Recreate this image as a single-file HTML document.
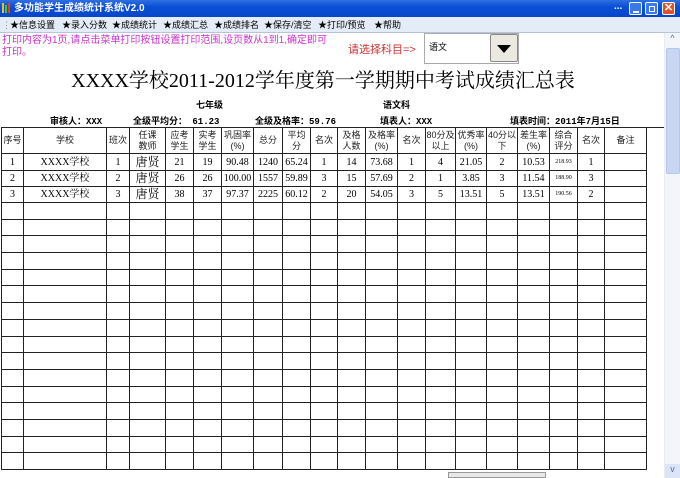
<!DOCTYPE html>
<html><head><meta charset="utf-8"><style>
*{margin:0;padding:0;box-sizing:border-box}
body{width:680px;height:478px;overflow:hidden;background:#fff;font-family:"Liberation Sans","Noto Sans CJK SC",sans-serif;position:relative}
.a{position:absolute;white-space:nowrap}
#title{left:0;top:0;width:680px;height:17px;background:linear-gradient(#2f6fe0,#0a4fd6 40%,#0846c8);color:#fff;font-size:10px;line-height:17px;font-weight:bold}
#menu{left:0;top:17px;width:680px;height:16px;background:#e4ecf7;border-bottom:1px solid #b8c4d8;font-size:9px;line-height:16px;color:#000}
#menu span{position:absolute}
table{border-collapse:collapse;table-layout:fixed;font-family:"Liberation Serif","Noto Serif CJK SC",serif}
td{border:1px solid #222;text-align:center;font-size:10px;padding:0;overflow:hidden;line-height:11px}
.h td{font-size:9px;font-family:"Liberation Sans","Noto Sans CJK SC",sans-serif;color:#222}
.t{font-size:12px}
.b{font-weight:bold;font-size:9px;font-family:"Liberation Mono","Noto Sans CJK SC",monospace}
.btn{top:2px;width:13px;height:13px;border:1px solid #fff;border-radius:2px}
</style></head><body>
<div id="title" class="a"><span style="position:absolute;left:2px;top:3px;width:2px;height:10px;background:#f5c400"></span><span style="position:absolute;left:5px;top:5px;width:2px;height:8px;background:#3c3"></span><span style="position:absolute;left:8px;top:3px;width:2px;height:10px;background:#e33"></span><span style="position:absolute;left:14px">多功能学生成绩统计系统V2.0</span><span style="position:absolute;left:614px;top:-2px">...</span></div>
<div class="a btn" style="left:629px;background:#3b78e8"><div style="position:absolute;left:3px;top:8px;width:6px;height:2px;background:#fff"></div></div>
<div class="a btn" style="left:645px;background:#3b78e8"><div style="position:absolute;left:3px;top:3px;width:6px;height:6px;border:1px solid #fff"></div></div>
<div class="a btn" style="left:662px;background:#e0532a;color:#fff;font-size:11px;line-height:11px;text-align:center;font-weight:bold">✕</div>
<div id="menu" class="a"><span style="left:2px;color:#888">⋮</span><span style="left:10px">★信息设置</span><span style="left:62px">★录入分数</span><span style="left:112px">★成绩统计</span><span style="left:163px">★成绩汇总</span><span style="left:214px">★成绩排名</span><span style="left:264px">★保存/清空</span><span style="left:318px">★打印/预览</span><span style="left:374px">★帮助</span></div>
<div class="a" style="left:2px;top:35px;font-size:10px;line-height:12px;color:#c3c;white-space:normal;width:335px">打印内容为1页,请点击菜单打印按钮设置打印范围,设页数从1到1,确定即可打印。</div>
<div class="a" style="left:348px;top:41px;font-size:11px;color:#c33">请选择科目=&gt;</div>
<div class="a" style="left:424px;top:33px;width:95px;height:31px;border:1px solid #aaa;background:#fff;font-size:9px;line-height:27px;padding-left:4px">语文</div>
<div class="a" style="left:490px;top:34px;width:28px;height:28px;background:#ece9e2;border:1px solid #888;border-radius:2px"><div style="position:absolute;left:6px;top:10px;border-left:7px solid transparent;border-right:7px solid transparent;border-top:8px solid #000"></div></div>
<div class="a" style="left:0;width:646px;top:64px;text-align:center;font-size:20px;font-family:'Liberation Serif','Noto Serif CJK SC',serif">XXXX学校2011-2012学年度第一学期期中考试成绩汇总表</div>
<div class="a b" style="left:196px;top:98px">七年级</div>
<div class="a b" style="left:383px;top:98px">语文科</div>
<div class="a b" style="left:50px;top:114px">审核人：XXX</div>
<div class="a b" style="left:133px;top:114px">全级平均分： 61.23</div>
<div class="a b" style="left:255px;top:114px">全级及格率：59.76</div>
<div class="a b" style="left:380px;top:114px">填表人：XXX</div>
<div class="a b" style="left:510px;top:114px">填表时间：2011年7月15日</div>
<div class="a" style="left:646px;top:127px;width:18px;height:1px;background:#222"></div>
<table class="a" style="left:1px;top:127px;width:645px">
<colgroup><col style="width:22px"><col style="width:83px"><col style="width:23px"><col style="width:36px"><col style="width:28px"><col style="width:28px"><col style="width:32px"><col style="width:29px"><col style="width:28px"><col style="width:27px"><col style="width:28px"><col style="width:32px"><col style="width:28px"><col style="width:30px"><col style="width:31px"><col style="width:31px"><col style="width:32px"><col style="width:28px"><col style="width:27px"><col style="width:42px"></colgroup>
<tr class="h" style="height:26px"><td>序号</td><td>学校</td><td>班次</td><td>任课<br>教师</td><td>应考<br>学生</td><td>实考<br>学生</td><td>巩固率<br>(%)</td><td>总分</td><td>平均<br>分</td><td>名次</td><td>及格<br>人数</td><td>及格率<br>(%)</td><td>名次</td><td>80分及<br>以上</td><td>优秀率<br>(%)</td><td>40分以<br>下</td><td>差生率<br>(%)</td><td>综合<br>评分</td><td>名次</td><td>备注</td></tr>
<tr style="height:17px"><td>1</td><td>XXXX学校</td><td>1</td><td class="t">唐贤</td><td>21</td><td>19</td><td>90.48</td><td>1240</td><td>65.24</td><td>1</td><td>14</td><td>73.68</td><td>1</td><td>4</td><td>21.05</td><td>2</td><td>10.53</td><td style="font-size:6px">218.93</td><td>1</td><td></td></tr>
<tr style="height:16px"><td>2</td><td>XXXX学校</td><td>2</td><td class="t">唐贤</td><td>26</td><td>26</td><td>100.00</td><td>1557</td><td>59.89</td><td>3</td><td>15</td><td>57.69</td><td>2</td><td>1</td><td>3.85</td><td>3</td><td>11.54</td><td style="font-size:6px">188.90</td><td>3</td><td></td></tr>
<tr style="height:16px"><td>3</td><td>XXXX学校</td><td>3</td><td class="t">唐贤</td><td>38</td><td>37</td><td>97.37</td><td>2225</td><td>60.12</td><td>2</td><td>20</td><td>54.05</td><td>3</td><td>5</td><td>13.51</td><td>5</td><td>13.51</td><td style="font-size:6px">190.56</td><td>2</td><td></td></tr>
<tr style="height:16.7px"><td></td><td></td><td></td><td></td><td></td><td></td><td></td><td></td><td></td><td></td><td></td><td></td><td></td><td></td><td></td><td></td><td></td><td></td><td></td><td></td></tr>
<tr style="height:16.7px"><td></td><td></td><td></td><td></td><td></td><td></td><td></td><td></td><td></td><td></td><td></td><td></td><td></td><td></td><td></td><td></td><td></td><td></td><td></td><td></td></tr>
<tr style="height:16.7px"><td></td><td></td><td></td><td></td><td></td><td></td><td></td><td></td><td></td><td></td><td></td><td></td><td></td><td></td><td></td><td></td><td></td><td></td><td></td><td></td></tr>
<tr style="height:16.7px"><td></td><td></td><td></td><td></td><td></td><td></td><td></td><td></td><td></td><td></td><td></td><td></td><td></td><td></td><td></td><td></td><td></td><td></td><td></td><td></td></tr>
<tr style="height:16.7px"><td></td><td></td><td></td><td></td><td></td><td></td><td></td><td></td><td></td><td></td><td></td><td></td><td></td><td></td><td></td><td></td><td></td><td></td><td></td><td></td></tr>
<tr style="height:16.7px"><td></td><td></td><td></td><td></td><td></td><td></td><td></td><td></td><td></td><td></td><td></td><td></td><td></td><td></td><td></td><td></td><td></td><td></td><td></td><td></td></tr>
<tr style="height:16.7px"><td></td><td></td><td></td><td></td><td></td><td></td><td></td><td></td><td></td><td></td><td></td><td></td><td></td><td></td><td></td><td></td><td></td><td></td><td></td><td></td></tr>
<tr style="height:16.7px"><td></td><td></td><td></td><td></td><td></td><td></td><td></td><td></td><td></td><td></td><td></td><td></td><td></td><td></td><td></td><td></td><td></td><td></td><td></td><td></td></tr>
<tr style="height:16.7px"><td></td><td></td><td></td><td></td><td></td><td></td><td></td><td></td><td></td><td></td><td></td><td></td><td></td><td></td><td></td><td></td><td></td><td></td><td></td><td></td></tr>
<tr style="height:16.7px"><td></td><td></td><td></td><td></td><td></td><td></td><td></td><td></td><td></td><td></td><td></td><td></td><td></td><td></td><td></td><td></td><td></td><td></td><td></td><td></td></tr>
<tr style="height:16.7px"><td></td><td></td><td></td><td></td><td></td><td></td><td></td><td></td><td></td><td></td><td></td><td></td><td></td><td></td><td></td><td></td><td></td><td></td><td></td><td></td></tr>
<tr style="height:16.7px"><td></td><td></td><td></td><td></td><td></td><td></td><td></td><td></td><td></td><td></td><td></td><td></td><td></td><td></td><td></td><td></td><td></td><td></td><td></td><td></td></tr>
<tr style="height:16.7px"><td></td><td></td><td></td><td></td><td></td><td></td><td></td><td></td><td></td><td></td><td></td><td></td><td></td><td></td><td></td><td></td><td></td><td></td><td></td><td></td></tr>
<tr style="height:16.7px"><td></td><td></td><td></td><td></td><td></td><td></td><td></td><td></td><td></td><td></td><td></td><td></td><td></td><td></td><td></td><td></td><td></td><td></td><td></td><td></td></tr>
<tr style="height:16.7px"><td></td><td></td><td></td><td></td><td></td><td></td><td></td><td></td><td></td><td></td><td></td><td></td><td></td><td></td><td></td><td></td><td></td><td></td><td></td><td></td></tr>
<tr style="height:16.7px"><td></td><td></td><td></td><td></td><td></td><td></td><td></td><td></td><td></td><td></td><td></td><td></td><td></td><td></td><td></td><td></td><td></td><td></td><td></td><td></td></tr>
</table>
<div class="a" style="left:664px;top:33px;width:16px;height:445px;background:#f3f5fa;border-left:1px solid #e8ecf3"></div>
<div class="a" style="left:665px;top:33px;width:15px;height:14px;font-size:9px;color:#4a6ab0;text-align:center">^</div>
<div class="a" style="left:666px;top:48px;width:14px;height:126px;background:#c8d6f2;border:1px solid #b5c6ea;border-radius:2px"></div>
<div class="a" style="left:665px;top:464px;width:15px;height:14px;font-size:9px;color:#4a6ab0;text-align:center;background:#dbe5f7">v</div>
<div class="a" style="left:448px;top:472px;width:98px;height:6px;background:#e8e8e8;border:1px solid #999"></div>
</body></html>
